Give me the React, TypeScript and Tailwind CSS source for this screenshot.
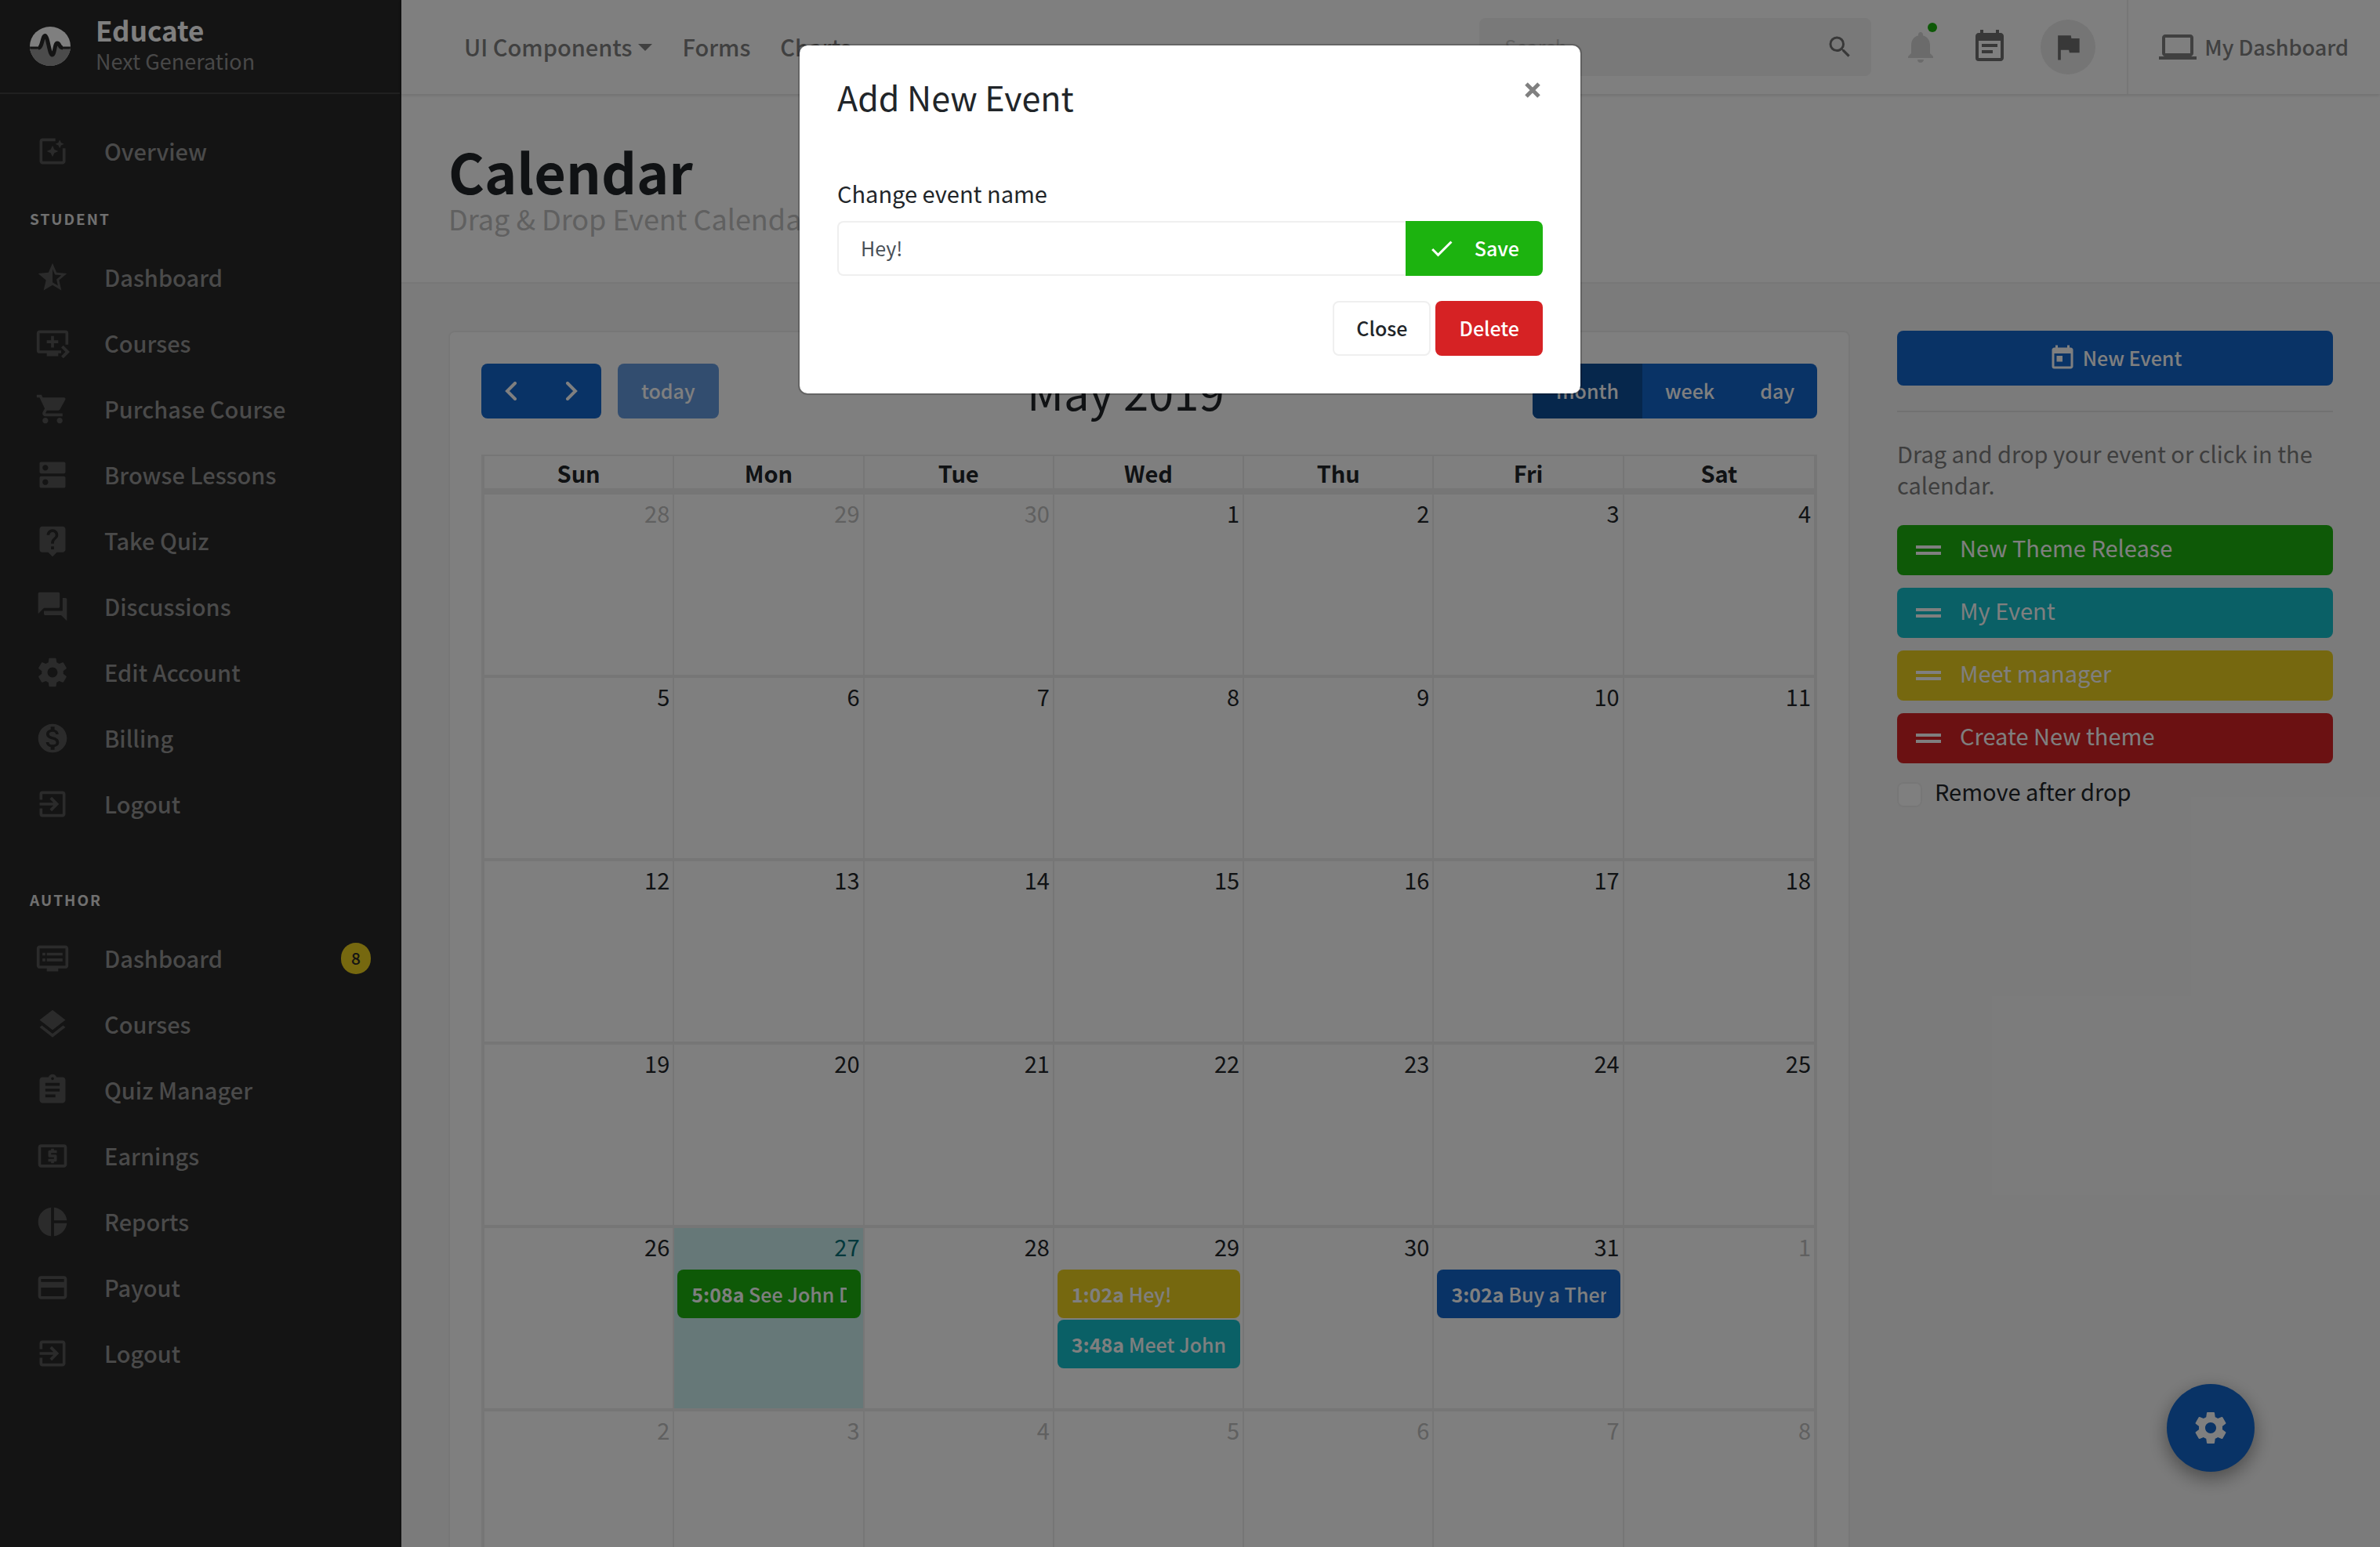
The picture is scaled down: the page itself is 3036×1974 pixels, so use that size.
import React from "react";
import type { IconType } from "react-icons";
import {
  MdAssignment,
  MdCheck,
  MdDragHandle,
  MdDns,
  MdDvr,
  MdEventNote,
  MdExitToApp,
  MdFlag,
  MdForum,
  MdLaptop,
  MdLayers,
  MdLiveHelp,
  MdLocalAtm,
  MdMonetizationOn,
  MdNotifications,
  MdPayment,
  MdPhotoFilter,
  MdPieChart,
  MdQueuePlayNext,
  MdSearch,
  MdShoppingCart,
  MdStarHalf,
  MdToday,
} from "react-icons/md";

function Gear({ className }: { className?: string }) {
  return (
    <svg viewBox="0 0 24 24" fill="currentColor" className={className} aria-hidden="true">
      <path d="M19.43 12.98c.04-.32.07-.64.07-.98s-.03-.66-.07-.98l2.11-1.65c.19-.15.24-.42.12-.64l-2-3.46c-.12-.22-.39-.3-.61-.22l-2.49 1c-.52-.4-1.08-.73-1.69-.98l-.38-2.65C14.46 2.18 14.25 2 14 2h-4c-.25 0-.46.18-.49.42l-.38 2.65c-.61.25-1.17.59-1.69.98l-2.49-1c-.23-.09-.49 0-.61.22l-2 3.46c-.13.22-.07.49.12.64l2.11 1.65c-.04.32-.07.65-.07.98s.03.66.07.98l-2.11 1.65c-.19.15-.24.42-.12.64l2 3.46c.12.22.39.3.61.22l2.49-1c.52.4 1.08.73 1.69.98l.38 2.65c.03.24.24.42.49.42h4c.25 0 .46-.18.49-.42l.38-2.65c.61-.25 1.17-.59 1.69-.98l2.49 1c.23.09.49 0 .61-.22l2-3.46c.12-.22.07-.49-.12-.64l-2.11-1.65zM12 15.5c-1.93 0-3.5-1.57-3.5-3.5s1.57-3.5 3.5-3.5 3.5 1.57 3.5 3.5-1.57 3.5-3.5 3.5z" />
    </svg>
  );
}

function Logo() {
  return (
    <svg viewBox="0 0 52 50" className="h-[50px] w-[52px]" aria-hidden="true">
      <clipPath id="logo-disc">
        <ellipse cx="26" cy="25" rx="26" ry="25" />
      </clipPath>
      <g clipPath="url(#logo-disc)">
        <rect width="52" height="50" fill="#ffffff" />
        <path d="M0 27H11C16 27 16 11.500 19.500 11.500S25 36 28.500 36 31.500 21 35 21 37 27 42 27H52V50H0Z" fill="#969696" />
        <path d="M-2 27H12M41 27H54" stroke="#282828" strokeWidth="3" />
        <path
          d="M11 27C16 27 16 11.500 19.500 11.500S25 36 28.500 36 31.500 21 35 21 37 27 42 27"
          fill="none"
          stroke="#282828"
          strokeWidth="5"
        />
      </g>
    </svg>
  );
}

type NavEntry = { label: string; icon: IconType | typeof Gear; badge?: string };

const overview: NavEntry[] = [{ label: "Overview", icon: MdPhotoFilter }];
const student: NavEntry[] = [
  { label: "Dashboard", icon: MdStarHalf },
  { label: "Courses", icon: MdQueuePlayNext },
  { label: "Purchase Course", icon: MdShoppingCart },
  { label: "Browse Lessons", icon: MdDns },
  { label: "Take Quiz", icon: MdLiveHelp },
  { label: "Discussions", icon: MdForum },
  { label: "Edit Account", icon: Gear },
  { label: "Billing", icon: MdMonetizationOn },
  { label: "Logout", icon: MdExitToApp },
];
const author: NavEntry[] = [
  { label: "Dashboard", icon: MdDvr, badge: "8" },
  { label: "Courses", icon: MdLayers },
  { label: "Quiz Manager", icon: MdAssignment },
  { label: "Earnings", icon: MdLocalAtm },
  { label: "Reports", icon: MdPieChart },
  { label: "Payout", icon: MdPayment },
  { label: "Logout", icon: MdExitToApp },
];

function NavList({ items }: { items: NavEntry[] }) {
  return (
    <ul>
      {items.map(({ label, icon: Icon, badge }) => (
        <li key={label}>
          <a href="#" className="flex h-[84px] items-center pl-[45px] pr-[37px] text-[29px] font-medium text-[#949494]">
            <Icon className="size-[44px] shrink-0 text-[#565656]" />
            <span className="ml-[44px] flex-1">{label}</span>
            {badge && (
              <span className="flex h-10 w-[38px] items-center justify-center rounded-full bg-[#ecd01e] text-[21px] text-[#282828]">
                {badge}
              </span>
            )}
          </a>
        </li>
      ))}
    </ul>
  );
}

function NavHeading({ children }: { children: React.ReactNode }) {
  return <h2 className="px-[38px] text-[19px] leading-6 font-bold tracking-[2px] text-[#e0e0e0]">{children}</h2>;
}

function Sidebar() {
  return (
    <aside className="w-[512px] shrink-0 border-r-2 border-[#222222] bg-[#282828]">
      <a href="#" className="flex h-[120px] items-center gap-8 border-b-2 border-[#414141] pl-[38px]">
        <Logo />
        <span className="flex flex-col pb-0.5">
          <span className="text-[35px] leading-10 font-bold text-white">Educate</span>
          <span className="text-[27px] leading-10 text-[#909090]">Next Generation</span>
        </span>
      </a>
      <nav className="pt-[31px]">
        <NavList items={overview} />
        <div className="pt-8 pb-[21px]">
          <NavHeading>STUDENT</NavHeading>
        </div>
        <NavList items={student} />
        <div className="pt-[68px] pb-[21px]">
          <NavHeading>AUTHOR</NavHeading>
        </div>
        <NavList items={author} />
      </nav>
    </aside>
  );
}

function TopBar() {
  return (
    <header className="relative flex h-[120px] shrink-0 items-center bg-white text-[#808080] shadow-[0_2px_4px_rgba(0,0,0,0.12)]">
      <nav className="flex gap-[38px] pl-20 text-[29px] font-medium">
        <a href="#" className="flex items-center gap-2">
          UI Components
          <span className="border-x-[9px] border-t-[9px] border-x-transparent border-t-[#808080]" />
        </a>
        <a href="#">Forms</a>
        <a href="#">Charts</a>
      </nav>
      <label className="ml-auto flex h-[74px] w-[500px] items-center rounded-lg bg-[#f2f2f2] pr-[22px] pl-8">
        <span className="sr-only">Search</span>
        <input type="search" placeholder="Search" className="min-w-0 flex-1 text-[25px] outline-none placeholder:text-[#c4c4c4]" />
        <MdSearch className="size-9 text-[#707070]" />
      </label>
      <button aria-label="Notifications" className="relative ml-[39px]">
        <MdNotifications className="size-12 text-[#d6d6d6]" />
        <span className="absolute -top-[7px] right-[3px] size-3 rounded-full bg-[#1cb30f]" />
      </button>
      <button aria-label="Events" className="ml-10">
        <MdEventNote className="size-12 text-[#707070]" />
      </button>
      <button aria-label="Messages" className="ml-[41px] flex size-[70px] items-center justify-center rounded-full bg-[#eaeaea]">
        <MdFlag className="size-[44px] text-[#707070]" />
      </button>
      <a href="#" className="ml-10 flex h-full items-center gap-2.5 border-l-2 border-[#efefef] pr-10 pl-[39px] text-[27px] font-medium">
        <MdLaptop className="size-12" />
        My Dashboard
      </a>
    </header>
  );
}

type CalEvent = { time: string; title: string; tone: string };

const toneClass: Record<string, string> = {
  green: "bg-[#1cb30f]",
  teal: "bg-[#14c0cc]",
  yellow: "bg-[#ecd01e]",
  red: "bg-[#d62224]",
  blue: "bg-[#1266cc]",
};

const events: Record<string, CalEvent[]> = {
  "4-1": [{ time: "5:08a", title: "See John Doe", tone: "green" }],
  "4-3": [
    { time: "1:02a", title: "Hey!", tone: "yellow" },
    { time: "3:48a", title: "Meet John", tone: "teal" },
  ],
  "4-5": [{ time: "3:02a", title: "Buy a Theme", tone: "blue" }],
};

const weekdays = ["Sun", "Mon", "Tue", "Wed", "Thu", "Fri", "Sat"];
const weeks = [
  [28, 29, 30, 1, 2, 3, 4],
  [5, 6, 7, 8, 9, 10, 11],
  [12, 13, 14, 15, 16, 17, 18],
  [19, 20, 21, 22, 23, 24, 25],
  [26, 27, 28, 29, 30, 31, 1],
  [2, 3, 4, 5, 6, 7, 8],
];

function isOutside(week: number, day: number) {
  return (week === 0 && day > 20) || (week > 3 && day < 10);
}

function MonthGrid() {
  return (
    <table className="mt-[46px] w-full table-fixed border-separate border-spacing-0 border-x-4 border-t-2 border-[#ededed] text-[29px]">
      <thead>
        <tr>
          {weekdays.map((d) => (
            <th
              key={d}
              scope="col"
              className="h-[49px] border-r-2 border-b-8 border-[#ededed] p-0 leading-9 font-bold last:border-r-0"
            >
              {d}
            </th>
          ))}
        </tr>
      </thead>
      <tbody>
        {weeks.map((week, w) => (
          <tr key={w}>
            {week.map((day, d) => {
              const isToday = w === 4 && d === 1;
              const tone = isToday ? "bg-[#ccf0f0] text-[#047078]" : isOutside(w, day) ? "text-[#c0c0c0]" : "";
              return (
                <td
                  key={d}
                  className={`h-[234px] border-r-2 border-b-4 border-[#ededed] pt-[3px] pr-[3px] pb-0 pl-1 align-top last:border-r-0 ${tone}`}
                >
                  <div className="mb-2.5 pr-px text-right leading-10">{day}</div>
                  <div className="flex flex-col gap-0.5">
                    {(events[`${w}-${d}`] ?? []).map((e) => (
                      <a
                        key={e.time}
                        href="#"
                        className={`block rounded-lg px-[18px] text-[25px] leading-[62px] font-medium text-white ${toneClass[e.tone]}`}
                      >
                        <span className="block overflow-hidden whitespace-nowrap">
                          <span className="font-bold">{e.time}</span> {e.title}
                        </span>
                      </a>
                    ))}
                  </div>
                </td>
              );
            })}
          </tr>
        ))}
      </tbody>
    </table>
  );
}

function Chevron({ flip }: { flip?: boolean }) {
  return (
    <svg viewBox="0 0 16 24" className={flip ? "h-6 w-4 -scale-x-100" : "h-6 w-4"} aria-hidden="true">
      <path d="M13 2 3 12l10 10" fill="none" stroke="currentColor" strokeWidth="4" strokeLinecap="round" strokeLinejoin="miter" />
    </svg>
  );
}

function CalendarCard() {
  return (
    <section className="col-span-3 rounded-lg border-2 border-[#efefef] bg-white px-10 pt-10">
      <div className="flex items-center justify-between text-[25px] font-medium text-white">
        <div className="flex gap-[21px]">
          <div className="flex h-[70px] w-[153px] rounded-lg bg-[#1266cc]">
            <button aria-label="Previous month" className="flex flex-1 items-center justify-center">
              <Chevron />
            </button>
            <button aria-label="Next month" className="flex flex-1 items-center justify-center">
              <Chevron flip />
            </button>
          </div>
          <button className="h-[70px] rounded-lg bg-[#659bde] px-[30px]">today</button>
        </div>
        <h2 className="text-[58px] leading-[70px] font-normal text-[#212529]">May 2019</h2>
        <div className="flex h-[70px] overflow-hidden rounded-lg bg-[#1266cc]">
          <button className="bg-[#0d4e98] px-[30px]">month</button>
          <button className="px-[29px]">week</button>
          <button className="px-[29px]">day</button>
        </div>
      </div>
      <MonthGrid />
    </section>
  );
}

const draggable = [
  { label: "New Theme Release", tone: "green" },
  { label: "My Event", tone: "teal" },
  { label: "Meet manager", tone: "yellow" },
  { label: "Create New theme", tone: "red" },
];

function EventPanel() {
  return (
    <aside className="text-[29px]">
      <button className="flex h-[70px] w-full items-center justify-center gap-2 rounded-lg bg-[#1266cc] text-[25px] font-medium text-white">
        <MdToday className="size-9" />
        New Event
      </button>
      <hr className="mt-8 border-t-2 border-[#e2e2e2]" />
      <p className="mt-8 leading-10 text-[#7c7c7c]">Drag and drop your event or click in the calendar.</p>
      <ul className="mt-8 flex flex-col gap-4">
        {draggable.map((d) => (
          <li key={d.label} className={`flex h-16 items-center rounded-lg pl-4 text-white ${toneClass[d.tone]}`}>
            <MdDragHandle className="size-12" />
            <span className="ml-4 pb-1.5">{d.label}</span>
          </li>
        ))}
      </ul>
      <label className="mt-3 flex h-12 items-center gap-4">
        <input type="checkbox" className="mt-2 size-8 appearance-none rounded-lg border-2 border-[#efefef] bg-white" />
        Remove after drop
      </label>
    </aside>
  );
}

function EventDialog() {
  return (
    <div
      role="dialog"
      aria-labelledby="dialog-title"
      className="relative mx-auto mt-14 w-[1000px] rounded-xl border-2 border-black/20 bg-white bg-clip-padding px-12 pt-[35px] pb-12"
    >
      <button aria-label="Close dialog" className="absolute top-[46px] right-[50px] text-[#808080]">
        <svg viewBox="0 0 22 22" className="size-[22px]" aria-hidden="true">
          <path d="M3 3l16 16M19 3 3 19" stroke="currentColor" strokeWidth="5" />
        </svg>
      </button>
      <h2 id="dialog-title" className="text-[43px] leading-[60px]">
        Add New Event
      </h2>
      <label htmlFor="event-name" className="mt-[73px] block text-[29px] leading-10">
        Change event name
      </label>
      <div className="mt-4 flex h-[70px]">
        <input
          id="event-name"
          type="text"
          defaultValue="Hey!"
          className="min-w-0 flex-1 rounded-l-lg border-2 border-r-0 border-[#efefef] px-7 text-[25px] text-[#495057] outline-none"
        />
        <button className="flex items-center rounded-r-lg bg-[#1cb30f] pr-[30px] pl-7 text-[25px] font-medium text-white">
          <MdCheck className="mr-6 size-9" />
          Save
        </button>
      </div>
      <div className="mt-8 flex justify-end gap-1.5 text-[25px] font-medium">
        <button className="h-[70px] rounded-lg border-2 border-[#efefef] px-7">Close</button>
        <button className="h-[70px] rounded-lg bg-[#d62224] px-[30px] text-white">Delete</button>
      </div>
    </div>
  );
}

export default function App() {
  return (
    <div className="relative flex h-screen overflow-hidden bg-[#f7f7f7] font-['Noto_Sans_CJK_SC','Noto_Sans',sans-serif] text-[#212529]">
      <Sidebar />
      <div className="flex min-w-0 flex-1 flex-col">
        <TopBar />
        <div className="shrink-0 border-b-2 border-[#efefef] bg-white p-[60px]">
          <h1 className="text-[70px] leading-[76px] font-bold">Calendar</h1>
          <p className="text-[36px] leading-[44px] text-[#c0c0c0]">Drag &amp; Drop Event Calendar</p>
        </div>
        <main className="grid grid-cols-4 gap-[60px] p-[60px]">
          <CalendarCard />
          <EventPanel />
        </main>
      </div>
      <button
        aria-label="Settings"
        className="absolute right-40 bottom-24 flex size-28 items-center justify-center rounded-full bg-[#1266cc] text-white shadow-[0_8px_24px_rgba(0,0,0,0.4)]"
      >
        <Gear className="size-12" />
      </button>
      <div className="absolute inset-0 bg-black/50">
        <EventDialog />
      </div>
    </div>
  );
}
